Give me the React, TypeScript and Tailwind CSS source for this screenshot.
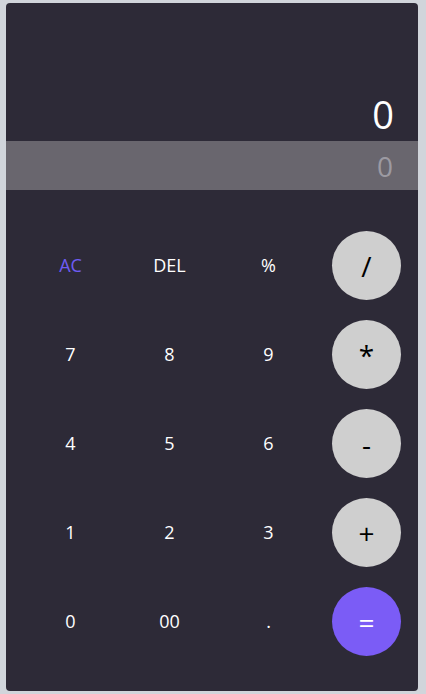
import React from "react";

const rows: { label: string; kind: "ac" | "plain" | "op" | "eq" }[][] = [
  [
    { label: "AC", kind: "ac" },
    { label: "DEL", kind: "plain" },
    { label: "%", kind: "plain" },
    { label: "/", kind: "op" },
  ],
  [
    { label: "7", kind: "plain" },
    { label: "8", kind: "plain" },
    { label: "9", kind: "plain" },
    { label: "*", kind: "op" },
  ],
  [
    { label: "4", kind: "plain" },
    { label: "5", kind: "plain" },
    { label: "6", kind: "plain" },
    { label: "-", kind: "op" },
  ],
  [
    { label: "1", kind: "plain" },
    { label: "2", kind: "plain" },
    { label: "3", kind: "plain" },
    { label: "+", kind: "op" },
  ],
  [
    { label: "0", kind: "plain" },
    { label: "00", kind: "plain" },
    { label: ".", kind: "plain" },
    { label: "=", kind: "eq" },
  ],
];

export default function App() {
  return (
    <div
      className="min-h-[694px] w-[426px] bg-[#d1d5db] pt-[3px] pl-[6px]"
      style={{ fontFamily: '"Open Sans", "Noto Sans", sans-serif' }}
    >
      <div className="flex h-[688px] w-[412px] flex-col overflow-hidden rounded-[4px] bg-[#2d2a37]">
        <div className="flex h-[138px] items-end justify-end pr-[24px] pb-[4px]">
          <span className="text-[38px] leading-[46px] text-white">0</span>
        </div>
        <div className="flex h-[49px] items-center justify-end bg-[#69666e] pr-[25px]">
          <span className="text-[28px] leading-[36px] text-[#9c9aa2]">0</span>
        </div>
        <div className="grid grid-cols-[69px_69px_69px_69px] gap-x-[30px] gap-y-[20px] pt-[41px] pl-[30px]">
          {rows.flat().map((b, i) => {
            if (b.kind === "op" || b.kind === "eq") {
              return (
                <div
                  key={i}
                  className={
                    b.kind === "eq"
                      ? "-ml-[1px] flex h-[69px] w-[69px] items-center justify-center rounded-full bg-[#7b5cf6] text-[28px] text-white"
                      : "-ml-[1px] flex h-[69px] w-[69px] items-center justify-center rounded-full bg-[#cfcfcf] text-[28px] text-black"
                  }
                >
                  {b.label}
                </div>
              );
            }
            return (
              <div
                key={i}
                className={
                  b.kind === "ac"
                    ? "flex h-[69px] w-[69px] items-center justify-center text-[18px] text-[#6e5cf4]"
                    : "flex h-[69px] w-[69px] items-center justify-center text-[18px] text-white"
                }
              >
                {b.label}
              </div>
            );
          })}
        </div>
      </div>
    </div>
  );
}
